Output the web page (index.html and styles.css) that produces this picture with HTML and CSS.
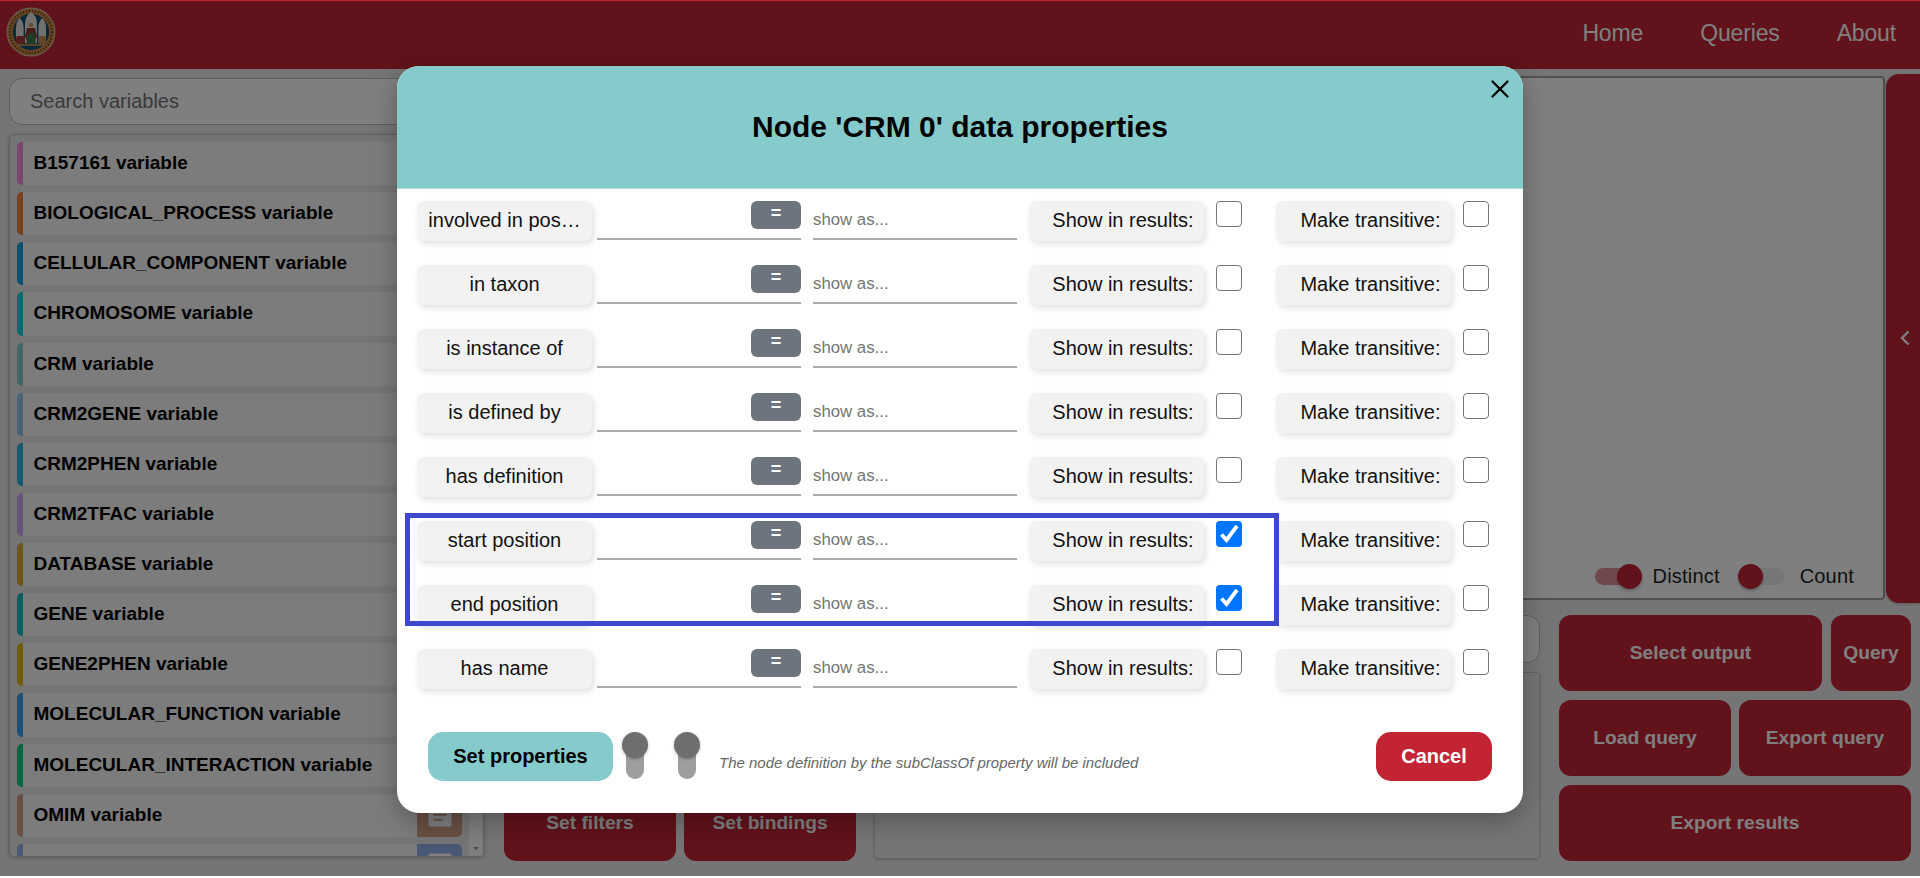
FILE: index.html
```html
<!DOCTYPE html>
<html lang="en">
<head>
<meta charset="utf-8">
<title>Query builder</title>
<link rel="stylesheet" href="styles.css">
</head>
<body>
<div class="page">
  <header class="topbar">
    <svg class="logo" viewBox="0 0 50 50">
      <circle cx="25" cy="25" r="24.5" fill="#c9bfae"/>
      <circle cx="25" cy="25" r="23.6" fill="#d08a48"/>
      <circle cx="25" cy="25" r="21" fill="none" stroke="#6a4520" stroke-width="2.600" stroke-dasharray="1.2 1.9"/>
      <circle cx="25" cy="25" r="18.2" fill="#10506e"/>
      <path d="M10 36V21q0-6 3.800-10 3.800 4 3.800 10V36zM19 36V17q0-8 6-12 6 4 6 12V36zM32.400 36V21q0-6 3.800-10 3.800 4 3.800 10V36z" fill="#e6e3df"/>
      <circle cx="25" cy="18" r="2.300" fill="#c99a68"/>
      <path d="M21 21h8l2 8-4 9h-5l-3-9z" fill="#8d3a35"/>
      <path d="M21 28l7-3 2 12h-9z" fill="#3f7a4c"/>
      <rect x="10" y="29" width="9" height="8" rx="2" fill="#a53c3c"/>
      <rect x="32" y="29" width="8" height="8" rx="2" fill="#c78a4a"/>
      <path d="M11 38h28" stroke="#d8a25a" stroke-width="1.500"/>
    </svg>
    <nav class="nav"><a>Home</a><a>Queries</a><a>About</a></nav>
  </header>

  <main class="main">
    <aside class="sidebar">
      <div class="search">Search variables</div>
      <div class="varbox">
        <ul class="varlist">
          <li class="var pink"><span>B157161 variable</span><i></i></li>
          <li class="var orange"><span>BIOLOGICAL_PROCESS variable</span><i></i></li>
          <li class="var blue"><span>CELLULAR_COMPONENT variable</span><i></i></li>
          <li class="var cyan"><span>CHROMOSOME variable</span><i></i></li>
          <li class="var sage"><span>CRM variable</span><i></i></li>
          <li class="var steel"><span>CRM2GENE variable</span><i></i></li>
          <li class="var sky"><span>CRM2PHEN variable</span><i></i></li>
          <li class="var lilac"><span>CRM2TFAC variable</span><i></i></li>
          <li class="var ochre"><span>DATABASE variable</span><i></i></li>
          <li class="var teal"><span>GENE variable</span><i></i></li>
          <li class="var gold"><span>GENE2PHEN variable</span><i></i></li>
          <li class="var azure"><span>MOLECULAR_FUNCTION variable</span><i></i></li>
          <li class="var green"><span>MOLECULAR_INTERACTION variable</span><i></i></li>
          <li class="var tan"><span>OMIM variable</span><i><svg viewBox="0 0 24 24"><rect x=".5" y=".5" width="23" height="23" rx="2" fill="#fff"/><path d="M5.500 6h13M5.500 11.700h13M5.500 16.800h9" stroke="#d0a084" stroke-width="2"/></svg></i></li>
          <li class="var peri"><span></span><i><svg viewBox="0 0 24 24"><rect x=".5" y=".5" width="23" height="23" rx="2" fill="#fff"/></svg></i></li>
        </ul>
        <div class="scroll"><b></b></div>
      </div>
    </aside>

    <section class="work">
      <div class="stage">
        <div class="canvas">
          <span class="switch on"></span><label class="distinct">Distinct</label>
          <span class="switch"></span><label>Count</label>
        </div>
        <div class="tab"><svg viewBox="0 0 10 16"><path d="M8.500 1.500L2 8l6.500 6.500" fill="none" stroke="#fff" stroke-width="2.400"/></svg></div>
      </div>
      <div class="bottom">
        <div class="pair"><button class="btn">Set filters</button><button class="btn">Set bindings</button></div>
        <div class="results"><div class="field"></div><div class="panel"></div></div>
        <div class="actions">
          <div class="line"><button class="btn wide">Select output</button><button class="btn query">Query</button></div>
          <div class="line"><button class="btn wide">Load query</button><button class="btn wide">Export query</button></div>
          <div class="line"><button class="btn wide">Export results</button></div>
        </div>
      </div>
    </section>
  </main>
</div>

<div class="overlay">
  <div class="modal">
    <div class="head">Node 'CRM 0' data properties
      <svg class="close" viewBox="0 0 18 18"><path d="M1.500 1.500l15 15M16.500 1.500l-15 15" stroke="#000" stroke-width="2.300" stroke-linecap="round"/></svg>
    </div>
    <div class="rows">
      <div class="row"><span class="tag">involved in pos…</span><div class="input"><b class="eq">=</b></div><div class="input as">show as...</div><span class="tag right">Show in results:</span><i class="check"></i><span class="tag right make">Make transitive:</span><i class="check"></i></div>
      <div class="row"><span class="tag">in taxon</span><div class="input"><b class="eq">=</b></div><div class="input as">show as...</div><span class="tag right">Show in results:</span><i class="check"></i><span class="tag right make">Make transitive:</span><i class="check"></i></div>
      <div class="row"><span class="tag">is instance of</span><div class="input"><b class="eq">=</b></div><div class="input as">show as...</div><span class="tag right">Show in results:</span><i class="check"></i><span class="tag right make">Make transitive:</span><i class="check"></i></div>
      <div class="row"><span class="tag">is defined by</span><div class="input"><b class="eq">=</b></div><div class="input as">show as...</div><span class="tag right">Show in results:</span><i class="check"></i><span class="tag right make">Make transitive:</span><i class="check"></i></div>
      <div class="row"><span class="tag">has definition</span><div class="input"><b class="eq">=</b></div><div class="input as">show as...</div><span class="tag right">Show in results:</span><i class="check"></i><span class="tag right make">Make transitive:</span><i class="check"></i></div>
      <div class="row"><span class="tag">start position</span><div class="input"><b class="eq">=</b></div><div class="input as">show as...</div><span class="tag right">Show in results:</span><i class="check checked"><svg viewBox="0 0 26 26"><path d="M5.500 13.500l5 5.500L21 5" fill="none" stroke="#fff" stroke-width="3.800"/></svg></i><span class="tag right make">Make transitive:</span><i class="check"></i></div>
      <div class="row"><span class="tag">end position</span><div class="input"><b class="eq">=</b></div><div class="input as">show as...</div><span class="tag right">Show in results:</span><i class="check checked"><svg viewBox="0 0 26 26"><path d="M5.500 13.500l5 5.500L21 5" fill="none" stroke="#fff" stroke-width="3.800"/></svg></i><span class="tag right make">Make transitive:</span><i class="check"></i></div>
      <div class="row"><span class="tag">has name</span><div class="input"><b class="eq">=</b></div><div class="input as">show as...</div><span class="tag right">Show in results:</span><i class="check"></i><span class="tag right make">Make transitive:</span><i class="check"></i></div>
    </div>
    <div class="foot">
      <button class="set">Set properties</button>
      <span class="vswitch"></span><span class="vswitch second"></span>
      <em>The node definition by the subClassOf property will be included</em>
      <button class="cancel">Cancel</button>
    </div>
    <div class="marker"></div>
  </div>
</div>
</body>
</html>
```
FILE: styles.css
```css
* { box-sizing: border-box; }
body { margin: 0; height: 878px; overflow: hidden; background: #fff; font-family: "Liberation Sans", Arial, sans-serif; color: #000; }
button { font: inherit; border: 0; padding: 0; }
.page { height: 876px; background: #ebebeb; overflow: hidden; }

.topbar { height: 69px; background: #c22434; display: flex; justify-content: space-between; align-items: flex-start; padding: 7px 24px 0 6px; }
.logo { width: 50px; height: 50px; }
.nav { display: flex; gap: 57px; font-size: 23px; letter-spacing: -.15px; line-height: 26px; padding-top: 13px; color: #fff; }

.main { display: flex; padding: 0 0 0 9px; }
.sidebar { width: 475px; padding-top: 9px; flex: none; }
.search { height: 47px; background: #fff; border: 1px solid #bbb; border-radius: 13px; padding-left: 20px; font-size: 20px; line-height: 44px; color: #757575; }
.varbox { margin-top: 9px; height: 723px; border: 1px solid #c0c0c0; border-radius: 5px; display: flex; overflow: hidden; box-shadow: 0 1px 4px rgba(0,0,0,.25); }
.varlist { list-style: none; margin: 0; padding: 7px 0 0 7px; width: 452px; display: flex; flex-direction: column; gap: 7px; }
.var { height: 43.14px; flex: none; background: #f8f8f8; border-left: 6px solid; border-radius: 5px; display: flex; justify-content: space-between; font-weight: bold; font-size: 19px; line-height: 41px; padding-left: 10.5px; overflow: hidden; }
.var i { width: 45px; display: flex; align-items: center; justify-content: center; }
.var i svg { width: 24px; height: 24px; }
.scroll { margin-left: auto; width: 14px; background: #fdfdfd; display: flex; align-items: flex-end; justify-content: center; }
.scroll b { border: 3px solid transparent; border-top-color: #a0a0a0; margin-bottom: 3px; }
.pink { border-color: #f48cdc; }
.orange { border-color: #f08038; }
.blue { border-color: #18a0e0; }
.cyan { border-color: #14d0de; }
.sage { border-color: #86cbcb; }
.steel { border-color: #90c4e8; }
.sky { border-color: #2cb4e0; }
.lilac { border-color: #d0a8f0; }
.ochre { border-color: #d8ac34; }
.teal { border-color: #14bcc0; }
.gold { border-color: #e0b814; }
.azure { border-color: #38a0ee; }
.green { border-color: #0ed080; }
.tan { border-color: #d0a084; }
.tan i { background: #d0a084; }
.peri { border-color: #90b0ea; }
.peri i { background: #90b0ea; }

.work { flex: 1; padding: 5px 0 0 20px; }
.stage { display: flex; height: 529px; }
.canvas { flex: 1; margin: 2px 1px 3px 0; border: 2px solid #a0a0a0; border-radius: 4px; background: #fff; display: flex; align-items: flex-end; justify-content: flex-end; padding: 0 29px 8px 0; font-size: 20px; line-height: 28px; letter-spacing: .19px; color: #222; }
.switch { position: relative; width: 40px; height: 17px; border-radius: 9px; background: #ececec; margin: 0 15px 5px 0; }
.switch::after { content: ""; position: absolute; left: -7px; top: -4px; width: 25px; height: 25px; border-radius: 50%; background: #c22434; box-shadow: 0 2px 3px rgba(0,0,0,.25); }
.switch.on { background: #e18e98; margin-right: 18px; }
.switch.on::after { left: 22px; }
.distinct { margin-right: 25px; }
.tab { width: 34px; background: #c22434; border-radius: 13px 0 0 13px; display: flex; align-items: center; justify-content: center; box-shadow: 0 1px 3px rgba(0,0,0,.25); }
.tab svg { width: 10px; height: 16px; margin: 0 0 2px 3px; }

.bottom { display: flex; align-items: stretch; height: 246px; margin-top: 12px; }
.pair { width: 352px; display: flex; gap: 8px; align-items: flex-end; }
.btn { background: #c22434; color: #fff; font-weight: bold; font-size: 19.2px; border-radius: 12px; height: 76px; padding-bottom: 1px; }
.pair .btn { width: 172px; }
.results { width: 666px; margin-left: 18px; display: flex; flex-direction: column; gap: 9px; }
.field { height: 48px; background: #fff; border: 1px solid #c0c0c0; border-radius: 13px; }
.panel { height: 187px; border: 1px solid #c8c8c8; border-radius: 4px; box-shadow: 0 1px 3px rgba(0,0,0,.2); }
.actions { width: 352px; margin-left: 19px; display: flex; flex-direction: column; gap: 9px; }
.line { display: flex; gap: 8px; }
.wide { flex: 1; }
.query { width: 80px; margin-left: 1px; }

.overlay { position: absolute; left: 0; top: 1px; width: 1920px; height: 875px; background: rgba(0,0,0,.5); display: flex; justify-content: center; align-items: flex-start; padding-top: 65px; }
.modal { position: relative; width: 1126px; height: 746.5px; background: #fff; border-radius: 22px; box-shadow: 0 8px 26px rgba(0,0,0,.28); }
.head { height: 123px; border-bottom: 1px solid #b4dcdc; border-radius: 22px 22px 0 0; background: #86cbcb; font-size: 30px; font-weight: bold; line-height: 121px; text-align: center; }
.close { position: absolute; right: 14px; top: 14px; width: 18px; height: 18px; }
.rows { display: flex; flex-direction: column; gap: 24px; padding: 12px 0 0 20px; }
.row { display: flex; height: 40px; font-size: 20px; line-height: 39px; color: #111; }
.tag { width: 175px; height: 40px; background: #f2f2f2; border-radius: 7px; text-align: center; box-shadow: 2px 3px 6px rgba(0,0,0,.12); }
.right { text-align: right; padding-right: 10.5px; margin-left: 12px; }
.make { margin-left: 34px; }
.input { width: 204px; height: 39px; margin-left: 5px; border-bottom: 2px solid #a9a9a9; display: flex; justify-content: flex-end; }
.as { justify-content: flex-start; margin-left: 12px; font-size: 16.8px; line-height: 38px; color: #757575; }
.eq { width: 50px; height: 28px; border-radius: 6px; background: #6c757d; color: #fff; font-size: 18px; line-height: 25px; text-align: center; }
.check { width: 26px; height: 26px; margin-left: 12px; border: 1.5px solid #767676; border-radius: 4px; }
.checked { border: 0; background: #0075ff; }
.checked svg { display: block; }
.foot { display: flex; padding: 43px 31px 0; }
.foot button { height: 49px; border-radius: 15px; font-size: 20px; font-weight: bold; }
.set { width: 185px; background: #86cbcb; }
.cancel { width: 116px; background: #c22434; color: #fff; margin-left: auto; }
.vswitch { position: relative; width: 18px; height: 36px; margin: 11px 0 0 13px; background: #9e9e9e; border-radius: 9px; }
.vswitch::after { content: ""; position: absolute; left: -4px; top: -11px; width: 26px; height: 26px; border-radius: 50%; background: #6e6e6e; box-shadow: 0 1px 3px rgba(0,0,0,.3); }
.second { margin-left: 34px; }
.foot em { font-size: 15px; line-height: 20px; color: #666; margin: 21px 0 0 23px; }
.marker { position: absolute; left: 8px; top: 447px; width: 874px; height: 113px; border: 5px solid #3f48cc; }
```
